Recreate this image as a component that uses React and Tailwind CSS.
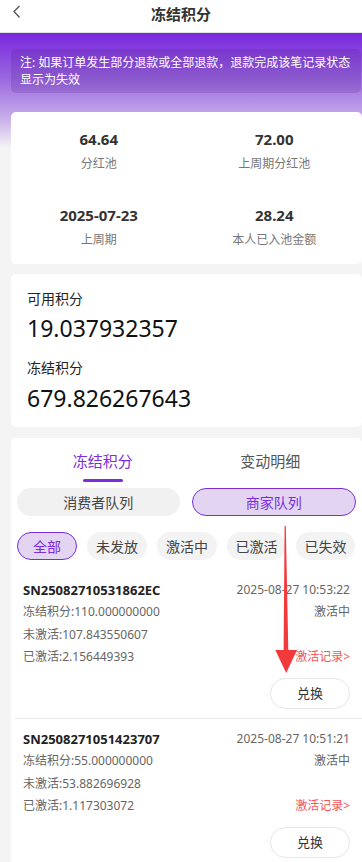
import React from "react";

const stats = [
  { value: "64.64", label: "分红池" },
  { value: "72.00", label: "上周期分红池" },
  { value: "2025-07-23", label: "上周期" },
  { value: "28.24", label: "本人已入池金额" },
];

const chips = [
  { label: "全部", w: "w-[60px]", active: true },
  { label: "未发放", w: "w-[60px]" },
  { label: "激活中", w: "w-[60px]" },
  { label: "已激活", w: "w-[59px]" },
  { label: "已失效", w: "w-[59px]" },
];

const records = [
  {
    sn: "SN25082710531862EC",
    time: "2025-08-27 10:53:22",
    frozen: "110.000000000",
    pending: "107.843550607",
    done: "2.156449393",
  },
  {
    sn: "SN2508271051423707",
    time: "2025-08-27 10:51:21",
    frozen: "55.000000000",
    pending: "53.882696928",
    done: "1.117303072",
  },
];

function Record({ r, last }) {
  return (
    <div className={`ml-[4px] pl-[8px] pr-[12px] ${last ? "pt-[9px] pb-[9px]" : "pt-[8px] pb-[9px] border-b border-[#ececec]"}`}>
      <div className="flex justify-between items-center leading-[22.3px]">
        <span className="text-[13px] font-bold text-[#222]">{r.sn}</span>
        <span className="text-[12px] text-[#666]">{r.time}</span>
      </div>
      <div className="flex justify-between text-[12px] leading-[22.3px] text-[#666]">
        <span>冻结积分:{r.frozen}</span>
        <span>激活中</span>
      </div>
      <div className="text-[12px] leading-[22.3px] text-[#666]">未激活:{r.pending}</div>
      <div className="flex justify-between text-[12px] leading-[22.3px] text-[#666]">
        <span>已激活:{r.done}</span>
        <span className="text-[#f2565a]">激活记录&gt;</span>
      </div>
      <div className="flex justify-end mt-[10px]">
        <div className="w-[80px] h-[31px] rounded-full border border-[#e6e6e6] flex items-center justify-center text-[13px] text-[#333]">
          兑换
        </div>
      </div>
    </div>
  );
}

export default function App() {
  return (
    <div
      className="relative min-h-screen bg-[#f4f4f4] w-[362px] overflow-hidden"
      style={{ fontFamily: '"Noto Sans", "Noto Sans CJK SC", sans-serif' }}
    >
      <header className="h-[33px] bg-white border-b border-[#e2e2e2] flex items-center justify-center relative">
        <svg className="absolute left-[12px] top-[5px]" width="10" height="14" viewBox="0 0 10 14">
          <polyline points="7.5,1 2,6.5 7.5,12.5" fill="none" stroke="#555" strokeWidth="1.3" />
        </svg>
        <span className="text-[15px] font-bold text-[#333] leading-none -mt-[4px]">冻结积分</span>
      </header>

      <div className="pt-[16px] bg-[linear-gradient(180deg,#7a28df_0px,#9a67e0_45px,#c8adea_85px,#f4f4f4_115px)]">
        <div className="ml-[11px] mr-[1px] rounded-[5px] bg-[rgba(70,20,130,0.18)] pl-[9px] pr-[4px] py-[5px] text-[12px] leading-[17px] text-white">
          注: 如果订单发生部分退款或全部退款，退款完成该笔记录状态显示为失效
        </div>

        <div className="ml-[11px] mt-[19px] bg-white rounded-[5px] grid grid-cols-2 gap-y-[33px] pt-[17px] pb-[16px]">
          {stats.map((s) => (
            <div key={s.label} className="flex flex-col items-center">
              <div className="text-[15px] font-bold text-[#333] leading-[20px]">{s.value}</div>
              <div className="text-[12px] text-[#777] leading-[16px] mt-[7px]">{s.label}</div>
            </div>
          ))}
        </div>
      </div>

      <div className="ml-[11px] mt-[10px] bg-white rounded-[5px] pl-[16px] pt-[15px] pb-[14px]">
        <div className="text-[14px] text-[#222] leading-[20px]">可用积分</div>
        <div className="text-[23px] text-[#111] leading-[30px] mt-[4px]">19.037932357</div>
        <div className="text-[14px] text-[#222] leading-[20px] mt-[15px]">冻结积分</div>
        <div className="text-[23px] text-[#111] leading-[30px] mt-[5px]">679.826267643</div>
      </div>

      <div className="ml-[11px] mt-[11px] bg-white rounded-t-[5px] pb-[20px]">
        <div className="flex px-[8px] pt-[12px]">
          <div className="flex-1 flex flex-col items-center">
            <span className="text-[15px] text-[#7a2ddd] leading-[22px]">冻结积分</span>
            <span className="mt-[7px] w-[40px] h-[3px] rounded-full bg-[#7a2ddd]" />
          </div>
          <div className="flex-1 flex flex-col items-center">
            <span className="text-[15px] text-[#555] leading-[22px]">变动明细</span>
          </div>
        </div>

        <div className="flex gap-[12px] px-[6px] mt-[6px]">
          <div className="flex-1 h-[28px] rounded-full bg-[#f1f1f1] flex items-center justify-center text-[14px] text-[#444]">
            消费者队列
          </div>
          <div className="flex-1 h-[28px] rounded-full bg-[#e3d5f2] border border-[#7a2ddd] flex items-center justify-center text-[14px] text-[#7a2ddd]">
            商家队列
          </div>
        </div>

        <div className="flex gap-[10px] pl-[6px] mt-[16px] mb-[11px]">
          {chips.map((c) => (
            <div
              key={c.label}
              className={`${c.w} shrink-0 h-[28px] rounded-full flex items-center justify-center text-[14px] ${
                c.active
                  ? "bg-[#e3d5f2] border border-[#7a2ddd] text-[#7a2ddd]"
                  : "bg-[#f3f3f3] text-[#444]"
              }`}
            >
              {c.label}
            </div>
          ))}
        </div>

        {records.map((r, i) => (
          <Record key={r.sn} r={r} last={i === records.length - 1} />
        ))}
      </div>

      <svg className="absolute left-0 top-0 pointer-events-none" width="362" height="862">
        <polygon
          points="284.6,526 285.8,526 288.3,650 297,650 286.2,673 275.3,650 283.6,650"
          fill="#f23a3c"
        />
      </svg>
    </div>
  );
}
